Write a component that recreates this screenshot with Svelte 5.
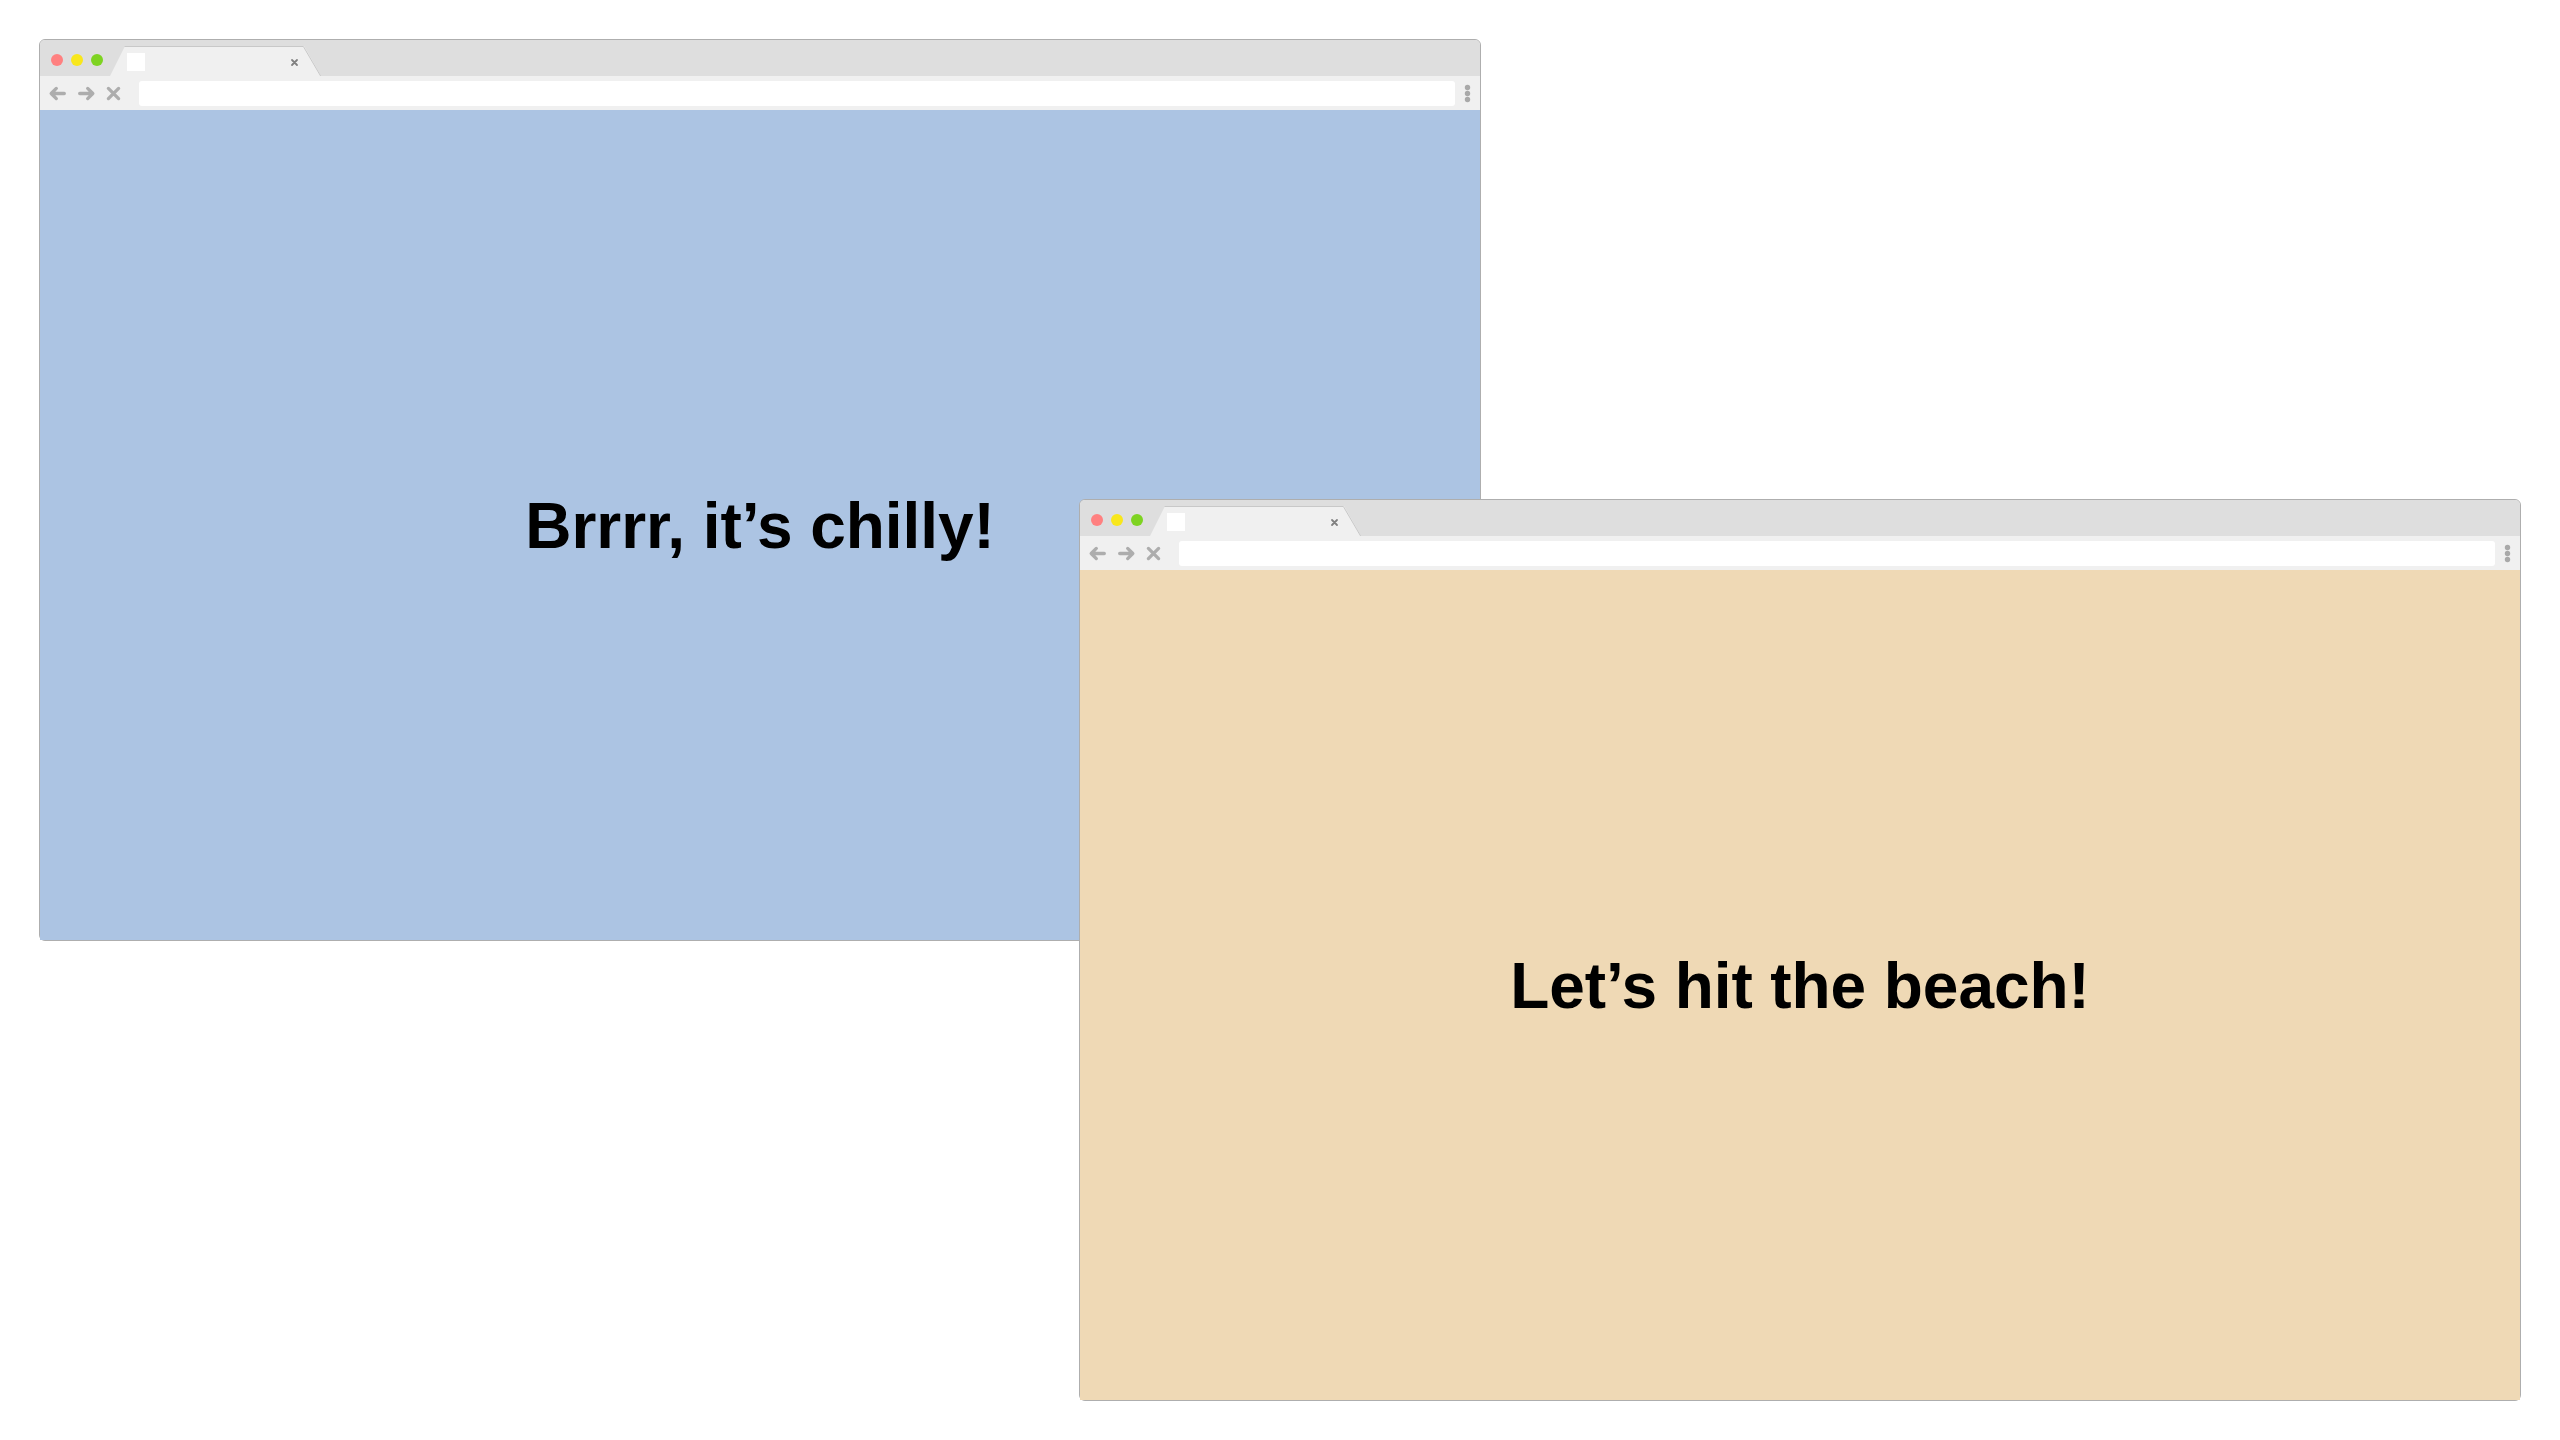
<script>
  const windows = [
    { name: 'cold', title: 'Brrrr, it’s chilly!' },
    { name: 'warm', title: 'Let’s hit the beach!' }
  ];
</script>

<main>
  {#each windows as w}
    <section class="window {w.name}">
      <header class="tabs">
        <i class="light red"></i>
        <i class="light yellow"></i>
        <i class="light green"></i>
        <div class="tab">
          <svg width="212" height="30" viewBox="0 0 212 30">
            <path class="fill" d="M0 30 L15 0 H194 L211 30 Z" />
            <path class="edge" d="M14.5 .5 H193.4 L210.6 30" />
            <rect x="17" y="7" width="18" height="18" fill="#fff" />
            <path class="close" d="M182 14 l5 5 M187 14 l-5 5" />
          </svg>
        </div>
      </header>
      <div class="toolbar">
        <svg class="nav" width="99" height="34" viewBox="0 0 99 34">
          <path d="M24.3 17.5 H11.2 M16.3 12.4 L11.2 17.5 L16.3 22.6" />
          <path d="M39.7 17.5 H52.8 M47.7 12.4 L52.8 17.5 L47.7 22.6" />
          <path d="M68.4 12.4 L78.6 22.6 M78.6 12.4 L68.4 22.6" />
        </svg>
        <div class="address"></div>
        <svg class="menu" width="25" height="34" viewBox="0 0 25 34">
          <circle cx="12.5" cy="11.5" r="2.7" />
          <circle cx="12.5" cy="17.5" r="2.7" />
          <circle cx="12.5" cy="23.5" r="2.7" />
        </svg>
      </div>
      <div class="page"><h1>{w.title}</h1></div>
    </section>
  {/each}
</main>

<style>
  :global(body) {
    background: #fff;
  }
  main {
    position: relative;
    width: 2560px;
    height: 1440px;
    overflow: hidden;
  }
  .window {
    position: absolute;
    box-sizing: border-box;
    width: 1442px;
    height: 902px;
    border: 1px solid #aeaeae;
    border-radius: 6px;
    background: #f0f0f0;
    display: flex;
    flex-direction: column;
  }
  .cold {
    left: 39px;
    top: 39px;
  }
  .warm {
    left: 1079px;
    top: 499px;
  }
  .tabs {
    display: flex;
    align-items: center;
    gap: 8px;
    height: 36px;
    padding-left: 11px;
    background: #dedede;
    border-radius: 5px 5px 0 0;
  }
  .light {
    width: 12px;
    height: 12px;
    margin-top: 4px;
    border-radius: 50%;
  }
  .red {
    background: #ff8080;
  }
  .yellow {
    background: #f8e71c;
  }
  .green {
    background: #7ed321;
  }
  .tab {
    align-self: flex-end;
    height: 30px;
    margin-left: -1px;
  }
  svg {
    display: block;
    flex: none;
  }
  .fill {
    fill: #f0f0f0;
  }
  .edge {
    fill: none;
    stroke: #c8c8c8;
  }
  .close {
    fill: none;
    stroke: #808080;
    stroke-width: 1.8;
    stroke-linecap: round;
  }
  .toolbar {
    display: flex;
    align-items: center;
    height: 34px;
  }
  .nav {
    fill: none;
    stroke: #adadad;
    stroke-width: 3.3;
    stroke-linecap: round;
    stroke-linejoin: round;
  }
  .menu {
    fill: #a9a9a9;
  }
  .address {
    flex: 1;
    height: 25px;
    margin: 1px 0 0;
    border-radius: 3px;
    background: #fff;
  }
  .page {
    flex: 1;
    display: flex;
    align-items: center;
    justify-content: center;
  }
  .cold .page {
    background: #acc4e3;
  }
  .warm .page {
    background: #efd9b5;
  }
  h1 {
    margin: 0;
    padding-top: 2px;
    color: #000;
    font: bold 64px/74px 'Liberation Sans', Arial, sans-serif;
    letter-spacing: -0.07px;
  }
</style>
